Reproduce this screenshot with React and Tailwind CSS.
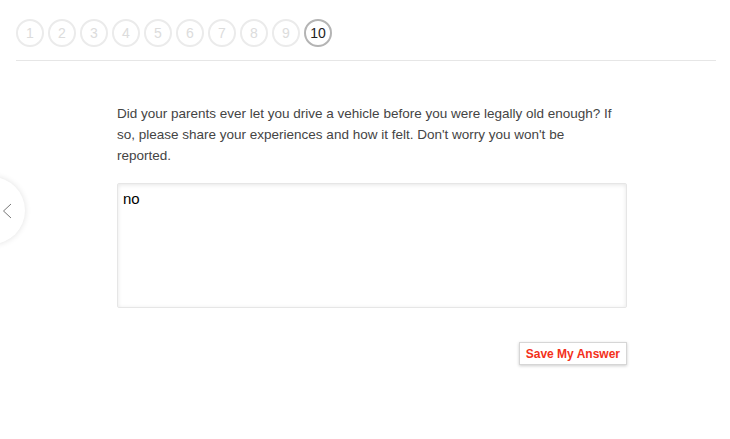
import React, { useState } from 'react'

const steps = [1, 2, 3, 4, 5, 6, 7, 8, 9, 10]

const App = () => {
    const [answer, setAnswer] = useState('no')
    const current = 10

    return (
        <div className="relative w-[730px] h-[439px] bg-white overflow-hidden font-['Liberation_Sans',Arial,sans-serif]">
            {/* step bubbles */}
            <div className="px-4 pt-[19px]">
                <div className="flex gap-1 h-7">
                    {steps.map((n) => (
                        <div
                            key={n}
                            className={
                                n === current
                                    ? "w-7 h-7 rounded-full border-2 border-[#b4b4b4] flex items-center justify-center text-[14px] text-[#222]"
                                    : "w-7 h-7 rounded-full border-2 border-[#ebebeb] flex items-center justify-center text-[14px] text-[#dcdcdc]"
                            }
                        >
                            {n}
                        </div>
                    ))}
                </div>
                <div className="mt-[13px] h-px bg-[#e6e6e6] w-[700px]" />
            </div>

            {/* back arrow */}
            <button className="absolute left-[-42px] top-[177px] w-[67px] h-[67px] rounded-full bg-white shadow-[0_0_6px_rgba(0,0,0,0.12)] flex items-center justify-end pr-[13px]">
                <svg width="10" height="16" viewBox="0 0 10 16" fill="none">
                    <path d="M9 1 L1.5 8 L9 15" stroke="#777" strokeWidth="1" />
                </svg>
            </button>

            {/* question */}
            <div className="ml-[117px] w-[510px] pt-[42px]">
                <p className="text-[13.5px] leading-[21px] text-[#444]">
                    Did your parents ever let you drive a vehicle before you were legally old enough? If<br />
                    so, please share your experiences and how it felt. Don't worry you won't be<br />
                    reported.
                </p>
                <textarea
                    value={answer}
                    onChange={(e) => setAnswer(e.target.value)}
                    className="mt-[17px] block w-[510px] h-[125px] resize-none border border-[#e6e6e6] rounded-[2px] shadow-[inset_0_1px_4px_rgba(0,0,0,0.1)] px-[5px] py-[6px] text-[15px] leading-[18px] text-black outline-none font-['Liberation_Sans',Arial,sans-serif]"
                />
                <div className="flex justify-end mt-[34px]">
                    <button className="h-[23px] px-[6px] border border-[#d6d6d6] bg-white shadow-[0_1px_3px_rgba(0,0,0,0.2)] text-[12px] font-bold text-[#f3301a]">
                        Save My Answer
                    </button>
                </div>
            </div>
        </div>
    )
}

export default App
